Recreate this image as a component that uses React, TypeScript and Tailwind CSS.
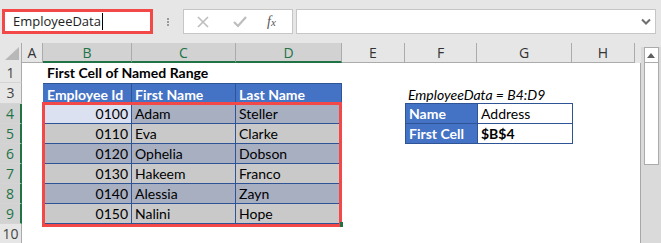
import React from "react"

const cellFont = { fontFamily: "Lato, 'Liberation Sans', sans-serif" }

type Col = { key: string; w: string }

const cols: Col[] = [
    { key: "A", w: "w-[21px]" },
    { key: "B", w: "w-[89px]" },
    { key: "C", w: "w-[104px]" },
    { key: "D", w: "w-[106px]" },
    { key: "E", w: "w-[63px]" },
    { key: "F", w: "w-[72px]" },
    { key: "G", w: "w-[95px]" },
    { key: "H", w: "w-[63px]" },
]

const people = [
    { id: "0100", first: "Adam", last: "Steller" },
    { id: "0110", first: "Eva", last: "Clarke" },
    { id: "0120", first: "Ophelia", last: "Dobson" },
    { id: "0130", first: "Hakeem", last: "Franco" },
    { id: "0140", first: "Alessia", last: "Zayn" },
    { id: "0150", first: "Nalini", last: "Hope" },
]

function RowHead({ label, selected, h }: { label: string; selected?: boolean; h: string }) {
    return (
        <div
            className={`w-[22px] ${h} shrink-0 flex items-center justify-center text-[14px] border-b border-[#d4d4d4] ${
                selected
                    ? "bg-[#d2d2d2] text-[#217346] border-r-2 border-r-[#217346]"
                    : "bg-[#e6e6e6] text-[#444] border-r border-r-[#ababab]"
            }`}
            style={{ fontFamily: "'Open Sans', 'Noto Sans', sans-serif" }}
        >
            {label}
        </div>
    )
}

function TopBar() {
    return (
        <div className="h-[43px] flex items-start pt-[9px] pl-[2px]" style={{ fontFamily: "'Open Sans', 'Noto Sans', sans-serif" }}>
            {/* Name box */}
            <div className="w-[151px] h-[25px] border-[3px] border-[#f24848] bg-white flex items-center pl-[8px] text-[13px] text-[#222]">
                EmployeeData
                <span className="w-px h-[17px] bg-black ml-px" />
            </div>

            {/* separator dots */}
            <div className="w-[30px] h-[25px] flex flex-col items-center justify-center gap-[1px]">
                <span className="w-[2px] h-[2px] bg-[#9a9a9a]" />
                <span className="w-[2px] h-[2px] bg-[#9a9a9a]" />
                <span className="w-[2px] h-[2px] bg-[#9a9a9a]" />
            </div>

            {/* cancel / enter / fx */}
            <div className="w-[110px] h-[25px] border border-[#c6c6c6] bg-white flex items-center">
                <svg width="14" height="14" viewBox="0 0 14 14" className="ml-[12px]">
                    <path d="M2 2 L12 12 M12 2 L2 12" stroke="#bdbdbd" strokeWidth="1.6" />
                </svg>
                <svg width="16" height="14" viewBox="0 0 16 14" className="ml-[22px]">
                    <path d="M2 7 L6 11 L14 2" stroke="#bdbdbd" strokeWidth="2.2" fill="none" />
                </svg>
                <span
                    className="ml-[19px] text-[14px] italic text-[#555]"
                    style={{ fontFamily: "'Liberation Serif', serif" }}
                >
                    f<span className="text-[11px]">x</span>
                </span>
            </div>

            {/* formula input */}
            <div className="ml-[3px] w-[360px] h-[25px] border border-[#c6c6c6] bg-white flex items-center justify-end pr-[4px]">
                <svg width="10" height="8" viewBox="0 0 10 8">
                    <path d="M1 1.5 L5 5.5 L9 1.5" stroke="#6f6f6f" strokeWidth="2" fill="none" />
                </svg>
            </div>
        </div>
    )
}

function ColumnHeader() {
    return (
        <div className="flex h-[20px]" style={{ fontFamily: "'Open Sans', 'Noto Sans', sans-serif" }}>
            <div className="w-[22px] h-[20px] bg-[#e6e6e6] border-r border-[#ababab] relative">
                <svg width="14" height="13" viewBox="0 0 14 13" className="absolute right-[2px] bottom-[3px]">
                    <path d="M14 0 L14 13 L0 13 Z" fill="#b8b8b8" />
                </svg>
            </div>
            {cols.map((c) => {
                const sel = c.key === "B" || c.key === "C" || c.key === "D"
                return (
                    <div
                        key={c.key}
                        className={`${c.w} shrink-0 h-[20px] flex items-center justify-center text-[14px] border-r border-[#ababab] ${
                            sel
                                ? "bg-[#d2d2d2] text-[#217346] border-b-2 border-b-[#217346]"
                                : "bg-[#e6e6e6] text-[#333] border-b border-b-[#ababab]"
                        }`}
                    >
                        {c.key}
                    </div>
                )
            })}
            <div className="flex-1 bg-[#e6e6e6]" />
        </div>
    )
}

export default function App() {
    return (
        <div className="w-[661px] h-[243px] bg-[#e6e6e6] overflow-hidden">
            <TopBar />
            <div className="flex h-[200px]">
                {/* sheet */}
                <div className="w-[641px] flex flex-col relative">
                    <ColumnHeader />
                    <div
                        className="flex-1 flex flex-col bg-white border-r border-[#a8a8a8] text-[14px] leading-[18px] text-black"
                        style={cellFont}
                    >
                        {/* row 1 */}
                        <div className="flex h-[20px]">
                            <RowHead label="1" h="h-[20px]" />
                            <div className="w-[21px]" />
                            <div className="pl-[4px] flex items-center font-bold whitespace-nowrap">First Cell of Named Range</div>
                        </div>

                        {/* row 3 (row 2 hidden) */}
                        <div className="flex h-[21px]">
                            <RowHead label="3" h="h-[21px]" />
                            <div className="w-[21px]" />
                            <div className="flex bg-[#4472c4] text-white font-bold border-t border-[#2f5496]">
                                <div className="w-[89px] pl-[4px] flex items-end border-r border-[#2f5496]">Employee Id</div>
                                <div className="w-[104px] pl-[3px] flex items-end border-r border-[#2f5496]">First Name</div>
                                <div className="w-[106px] pl-[3px] flex items-end border-r border-[#2f5496]">Last Name</div>
                            </div>
                            <div className="w-[63px]" />
                            <div className="pl-[3px] flex items-end italic whitespace-nowrap">EmployeeData = B4:D9</div>
                        </div>

                        {/* rows 4-9 */}
                        {people.map((p, i) => (
                            <div className="flex h-[20px]" key={p.id}>
                                <RowHead label={String(i + 4)} selected h="h-[20px]" />
                                <div className="w-[21px]" />
                                <div
                                    className={`flex h-[20px] border-b border-[#2f5496] ${i % 2 === 0 ? "bg-[#a8afc0]" : "bg-[#c9c9c9]"}`}
                                >
                                    <div
                                        className={`w-[89px] pr-[3px] flex items-center justify-end border-r border-[#2f5496] ${
                                            i === 0 ? "bg-[#dbe1f1]" : ""
                                        }`}
                                    >
                                        {p.id}
                                    </div>
                                    <div className="w-[104px] pl-[3px] flex items-center border-r border-[#2f5496]">{p.first}</div>
                                    <div className="w-[106px] pl-[3px] flex items-center border-r border-[#2f5496]">{p.last}</div>
                                </div>
                                <div className="w-[63px]" />
                                {i === 0 && (
                                    <div className="flex border border-[#2f5496] h-[21px] -mt-px">
                                        <div className="w-[72px] bg-[#4472c4] text-white font-bold pl-[3px] flex items-center border-r border-[#2f5496]">Name</div>
                                        <div className="w-[94px] pl-[3px] flex items-center">Address</div>
                                    </div>
                                )}
                                {i === 1 && (
                                    <div className="flex border border-t-0 border-[#2f5496] h-[20px]">
                                        <div className="w-[72px] bg-[#4472c4] text-white font-bold pl-[3px] flex items-center border-r border-[#2f5496]">First Cell</div>
                                        <div className="w-[94px] pl-[3px] flex items-center font-bold">$B$4</div>
                                    </div>
                                )}
                            </div>
                        ))}

                        {/* row 10 */}
                        <div className="flex h-[20px]">
                            <RowHead label="10" h="h-[20px]" />
                        </div>
                    </div>

                    {/* red annotation around B4:D9 */}
                    <div className="absolute left-[42px] top-[59px] w-[300px] h-[125px] border-[3px] border-[#f24848] pointer-events-none" />
                    <div className="absolute left-[340px] top-[179px] w-[3px] h-[5px] bg-[#217346]" />
                </div>

                {/* vertical scrollbar */}
                <div className="w-[20px] flex flex-col items-center bg-[#dadada]">
                    <div className="w-full h-[4px] bg-[#e6e6e6]" />
                    <div className="w-[15px] h-[16px] bg-white border border-[#ababab] flex items-center justify-center">
                        <svg width="8" height="5" viewBox="0 0 8 5">
                            <path d="M0 5 L4 0 L8 5 Z" fill="#606060" />
                        </svg>
                    </div>
                    <div className="w-[15px] h-[102px] bg-white border border-t-0 border-[#ababab]" />
                </div>
            </div>
        </div>
    )
}
